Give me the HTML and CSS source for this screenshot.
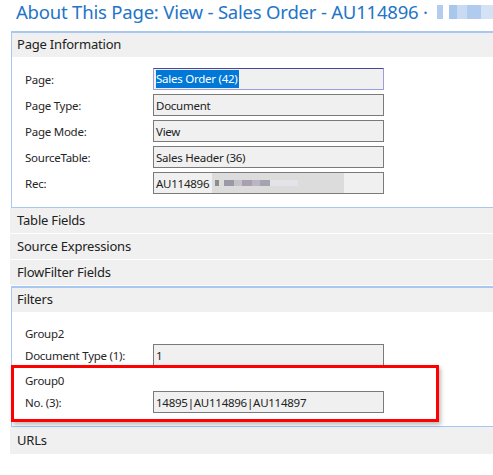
FILE: index.html
```html
<!DOCTYPE html>
<html>
<head>
<meta charset="utf-8">
<link rel="stylesheet" href="styles.css">
</head>
<body>
<div class="title-bar">
  <span class="title">About This Page: View - Sales Order - AU114896 ·</span>
  <span class="blur-title">
    <i class="b1"></i><i class="b2"></i><i class="b3"></i><i class="b4"></i><i class="b5"></i><i class="b6"></i>
  </span>
</div>
<div class="sections">
  <div class="panel">
    <div class="head">Page Information</div>
    <div class="body">
      <div class="row"><div class="label">Page:</div><div class="input focus"><span class="sel">Sales Order (42)</span></div></div>
      <div class="row"><div class="label">Page Type:</div><div class="input">Document</div></div>
      <div class="row"><div class="label">Page Mode:</div><div class="input">View</div></div>
      <div class="row"><div class="label">SourceTable:</div><div class="input">Sales Header (36)</div></div>
      <div class="row"><div class="label">Rec:</div><div class="input">AU114896 <span class="blur-rec"><i class="p1"></i><i class="p2"></i><i class="p3"></i><i class="p4"></i><i class="p5"></i><i class="p6"></i><i class="p7"></i></span></div></div>
    </div>
  </div>
  <div class="collapsed">Table Fields</div>
  <div class="collapsed">Source Expressions</div>
  <div class="collapsed">FlowFilter Fields</div>
  <div class="panel filters">
    <div class="head">Filters</div>
    <div class="body">
      <div class="group">Group2</div>
      <div class="row"><div class="label">Document Type (1):</div><div class="input">1</div></div>
      <div class="group">Group0</div>
      <div class="row"><div class="label">No. (3):</div><div class="input">14895|AU114896|AU114897</div></div>
    </div>
    <div class="highlight"></div>
  </div>
  <div class="collapsed">URLs</div>
</div>
</body>
</html>
```
FILE: styles.css
```css
html, body {
  margin: 0;
  padding: 0;
  background: #ffffff;
  overflow: hidden;
}
body {
  font-family: "Segoe UI", "Noto Sans", "Open Sans", sans-serif;
  color: #222222;
  width: 493px;
  height: 475px;
}
.title-bar {
  height: 31px;
  display: flex;
  align-items: flex-start;
  white-space: nowrap;
  overflow: hidden;
}
.title {
  font-size: 18.5px;
  color: #2474c8;
  margin-left: 16px;
  line-height: 23px;
  letter-spacing: -0.2px;
}
.blur-title {
  display: flex;
  margin-left: 9px;
  margin-top: 5px;
  height: 14px;
}
.blur-title i { display: block; height: 14px; }
.blur-title .b1 { width: 6px; background: #b4cdee; margin-right: 6px; }
.blur-title .b2 { width: 8px; background: #a9c6ec; }
.blur-title .b3 { width: 10px; background: #c9dbf3; }
.blur-title .b4 { width: 14px; background: #b0cbee; }
.blur-title .b5 { width: 16px; background: #d3e2f5; }
.blur-title .b6 { width: 12px; background: #c1d6f1; }

.sections {
  margin-left: 10px;
  width: 483px;
}
.panel {
  position: relative;
  border-top: 2px solid #a8c8f2;
  border-left: 1px solid #a8c8f2;
  border-bottom: 1px solid #a8c8f2;
  margin-left: 1px;
}
.head {
  background: #f0f0f0;
  height: 24px;
  line-height: 23px;
  font-size: 13px;
  padding-left: 5px;
  letter-spacing: -0.2px;
}
.body {
  padding: 11px 0 13px 13px;
  display: flex;
  flex-direction: column;
  gap: 4px;
}
.filters .body {
  padding-top: 12px;
  gap: 0;
}
.row {
  display: flex;
  align-items: center;
  height: 22px;
}
.filters .row + .group { margin-top: 5px; }
.label {
  width: 128px;
  flex: none;
  font-size: 11.5px;
  letter-spacing: -0.25px;
  color: #262626;
}
.input {
  box-sizing: border-box;
  width: 231px;
  flex: none;
  height: 22px;
  border: 1px solid #7a7a7a;
  background: #f0f0f0;
  font-size: 11.5px;
  letter-spacing: -0.25px;
  line-height: 19px;
  padding-left: 2px;
  white-space: nowrap;
  display: flex;
  align-items: center;
  overflow: hidden;
}
.input.focus {
  border-color: #9d9dd8;
  border-top-color: #4a46a0;
}
.sel {
  background: #0078d7;
  color: #ffffff;
  padding: 0 1px 0 0;
  line-height: 18px;
}
.blur-rec {
  display: flex;
  height: 22px;
  margin-left: 3px;
  width: 132px;
  flex: none;
  background: #dcdcdc;
  align-items: center;
  padding-left: 3px;
  box-sizing: border-box;
}
.blur-rec i { display: block; height: 6px; }
.blur-rec .p1 { width: 4px; background: #8c8c8c; margin-right: 5px; }
.blur-rec .p2 { width: 10px; background: #9a9aa6; }
.blur-rec .p3 { width: 8px; background: #c2c2c8; }
.blur-rec .p4 { width: 10px; background: #a8a0b2; }
.blur-rec .p5 { width: 8px; background: #bcb4c4; }
.blur-rec .p6 { width: 10px; background: #a4a4b0; }
.blur-rec .p7 { width: 28px; background: #e4e4e8; }
.group {
  font-size: 11.5px;
  letter-spacing: -0.25px;
  line-height: 20px;
  height: 20px;
  color: #262626;
}
.collapsed {
  background: #f0f0f0;
  height: 25px;
  line-height: 25px;
  font-size: 13px;
  letter-spacing: -0.2px;
  padding-left: 7px;
  margin-bottom: 1px;
}
.filters + .collapsed {
  height: 27px;
  line-height: 27px;
}
.highlight {
  position: absolute;
  left: -1px;
  top: 77px;
  width: 422px;
  height: 51px;
  border: 3px solid #ff0000;
  box-shadow: 2px 3px 4px rgba(0, 0, 0, 0.25);
}
```
